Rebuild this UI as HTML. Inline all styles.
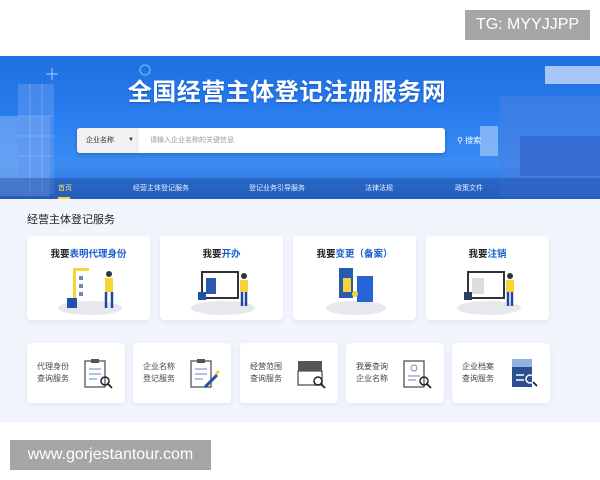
<!DOCTYPE html>
<html><head><meta charset="utf-8">
<style>
*{margin:0;padding:0;box-sizing:border-box}
body{width:600px;height:480px;background:#fff;font-family:"Liberation Sans","Noto Sans CJK SC",sans-serif;position:relative;overflow:hidden}
.tg{position:absolute;left:465px;top:10px;width:125px;height:30px;background:#a6a6a6;color:#fff;font-size:16px;line-height:30px;text-align:center}
.wm{position:absolute;left:10px;top:440px;width:201px;height:30px;background:#a6a6a6;color:#fff;font-size:16px;line-height:30px;text-align:center}
.banner{position:absolute;left:0;top:56px;width:600px;height:143px;background:linear-gradient(180deg,#1f6fe0 0%,#2a7ef0 45%,#3b8df2 75%,#2d6fd6 100%);overflow:hidden}
.title{position:absolute;left:0;width:574px;top:16px;text-align:center;color:#fff;font-size:24px;font-weight:bold;letter-spacing:0.5px;text-shadow:0 1px 2px rgba(0,40,120,.4)}
.search{position:absolute;left:77px;top:72px;width:368px;height:25px;background:#fff;border-radius:3px;box-shadow:0 2px 4px rgba(0,0,0,.2)}
.sel{position:absolute;left:0;top:0;width:62px;height:25px;background:#f1f1f1;border-radius:3px 0 0 3px;font-size:7px;color:#333;line-height:25px;padding-left:9px}
.sel b{position:absolute;left:51px;font-size:6px}
.ph{position:absolute;left:73px;top:0;line-height:25px;font-size:7px;color:#999}
.sbtn{position:absolute;left:457px;top:128px;color:#fff;font-size:8px;line-height:25px}
.nav{position:absolute;left:0;top:122px;width:600px;height:21px;background:rgba(20,60,140,.35)}
.nav span{position:absolute;top:5px;font-size:7px;color:#e8f0ff}
.content{position:absolute;left:0;top:199px;width:600px;height:223px;background:#f2f5fc}
.h{position:absolute;left:27px;top:12px;font-size:11px;color:#222}
.card{position:absolute;background:#fff;border-radius:4px;box-shadow:0 2px 6px rgba(120,140,190,.15)}
.big{top:37px;height:84px;width:123px}
.big .t{position:absolute;top:10px;width:100%;text-align:center;font-size:9.5px;font-weight:bold;color:#222}
.big .t em{font-style:normal;color:#1a5fd0}
.sm{top:144px;height:60px;width:98px}
.sm .t{position:absolute;left:10px;top:18px;font-size:8px;color:#444;line-height:12px}
.sm svg{position:absolute;left:56px;top:14px}
.big svg{position:absolute;left:28px;top:28px}
</style></head><body>
<div class="tg">TG: MYYJJPP</div>
<div class="banner">
<svg width="600" height="143" style="position:absolute;left:0;top:0">
<rect x="0" y="60" width="50" height="80" fill="#8fb8f5" opacity=".5"/>
<rect x="18" y="28" width="36" height="110" fill="#5e98ee" opacity=".55"/>
<g stroke="#bcd6ff" stroke-width=".6" opacity=".6"><line x1="18" y1="60" x2="54" y2="60"/><line x1="18" y1="80" x2="54" y2="80"/><line x1="18" y1="100" x2="54" y2="100"/><line x1="30" y1="28" x2="30" y2="138"/><line x1="42" y1="28" x2="42" y2="138"/></g>
<rect x="500" y="40" width="100" height="100" fill="#4a7fe0" opacity=".55"/>
<rect x="520" y="80" width="80" height="40" fill="#2e5fc8" opacity=".6"/>
<rect x="545" y="10" width="55" height="18" fill="#dfeaff" opacity=".7"/>
<rect x="480" y="70" width="18" height="30" fill="#cfe0ff" opacity=".5"/>
<circle cx="145" cy="14" r="5" fill="none" stroke="#6fb0ff" stroke-width="1.3"/>
<path d="M52 12v12M46 18h12" stroke="#8cc0ff" stroke-width="1.2"/>
</svg>
<div class="title">全国经营主体登记注册服务网</div>
<div class="search"><div class="sel">企业名称<b>▼</b></div><div class="ph">请输入企业名称的关键信息</div></div>
<div class="nav">
<span style="left:58px;color:#ffe066">首页</span>
<div style="position:absolute;left:58px;top:19px;width:12px;height:2px;background:#ffd23c"></div>
<span style="left:133px">经营主体登记服务</span>
<span style="left:249px">登记业务引导服务</span>
<span style="left:365px">法律法规</span>
<span style="left:455px">政策文件</span>
</div>
</div>
<div class="sbtn">&#9906; 搜索</div>
<div class="content">
<div class="h">经营主体登记服务</div>
<div class="card big" style="left:27px"><div class="t">我要<em>表明代理身份</em></div>
<svg width="70" height="52"><ellipse cx="35" cy="44" rx="32" ry="7" fill="#e6e8ee"/><path d="M18 4h16v3H21v36h-3z" fill="#f5d33a"/><g fill="#6b86b8"><rect x="24" y="12" width="4" height="4"/><rect x="24" y="20" width="4" height="4"/><rect x="24" y="28" width="4" height="4"/></g><rect x="12" y="34" width="10" height="10" fill="#2252a8"/><circle cx="54" cy="10" r="3" fill="#333"/><rect x="50" y="14" width="8" height="14" fill="#f5d33a"/><path d="M51 28v16M57 28v16" stroke="#1c4aa0" stroke-width="2.5"/></svg></div>
<div class="card big" style="left:160px"><div class="t">我要<em>开办</em></div>
<svg width="70" height="52"><ellipse cx="35" cy="44" rx="32" ry="7" fill="#e6e8ee"/><rect x="14" y="8" width="36" height="26" fill="#fff" stroke="#333" stroke-width="2"/><rect x="18" y="14" width="10" height="16" fill="#2a5ab0"/><rect x="10" y="28" width="8" height="8" fill="#2252a8"/><circle cx="56" cy="12" r="3" fill="#333"/><rect x="52" y="16" width="8" height="12" fill="#f5d33a"/><path d="M54 28v14M58 28v14" stroke="#1c4aa0" stroke-width="2.5"/></svg></div>
<div class="card big" style="left:293px"><div class="t">我要<em>变更（备案）</em></div>
<svg width="70" height="52"><ellipse cx="35" cy="44" rx="30" ry="7" fill="#e6e8ee"/><rect x="18" y="4" width="14" height="30" fill="#2a5ab0"/><rect x="36" y="12" width="16" height="26" fill="#2563d6"/><rect x="22" y="14" width="8" height="14" fill="#f5d33a"/><circle cx="34" cy="30" r="3" fill="#f5d33a"/></svg></div>
<div class="card big" style="left:426px"><div class="t">我要<em>注销</em></div>
<svg width="70" height="52"><ellipse cx="35" cy="44" rx="32" ry="7" fill="#e6e8ee"/><rect x="14" y="8" width="36" height="26" fill="#fff" stroke="#333" stroke-width="2"/><rect x="18" y="14" width="12" height="16" fill="#ddd"/><rect x="10" y="28" width="8" height="8" fill="#2b3f66"/><circle cx="56" cy="12" r="3" fill="#333"/><rect x="52" y="16" width="8" height="12" fill="#f5d33a"/><path d="M54 28v14M58 28v14" stroke="#1c4aa0" stroke-width="2.5"/></svg></div>

<div class="card sm" style="left:27px"><div class="t">代理身份<br>查询服务</div><svg width="32" height="34"><rect x="2" y="4" width="20" height="26" fill="#fff" stroke="#555" stroke-width="1.3"/><rect x="8" y="2" width="8" height="4" fill="#555"/><path d="M6 12h12M6 17h12M6 22h8" stroke="#6b86b8"/><circle cx="22" cy="24" r="4" fill="none" stroke="#222" stroke-width="1.5"/><path d="M25 27l4 4" stroke="#222" stroke-width="1.8"/></svg></div>
<div class="card sm" style="left:133px"><div class="t">企业名称<br>登记服务</div><svg width="32" height="34"><rect x="2" y="4" width="20" height="26" fill="#fff" stroke="#555" stroke-width="1.3"/><rect x="8" y="2" width="8" height="4" fill="#555"/><path d="M6 12h12M6 17h12M6 22h8" stroke="#6b86b8"/><path d="M16 30l12-12" stroke="#2252a8" stroke-width="3"/><path d="M27 17l3-3" stroke="#f5d33a" stroke-width="3"/></svg></div>
<div class="card sm" style="left:240px"><div class="t">经营范围<br>查询服务</div><svg width="32" height="34"><rect x="2" y="4" width="24" height="10" fill="#555"/><rect x="2" y="14" width="24" height="14" fill="#fff" stroke="#555" stroke-width="1.3"/><circle cx="22" cy="24" r="4" fill="none" stroke="#222" stroke-width="1.5"/><path d="M25 27l4 4" stroke="#222" stroke-width="1.8"/></svg></div>
<div class="card sm" style="left:346px"><div class="t">我要查询<br>企业名称</div><svg width="32" height="34"><rect x="2" y="4" width="20" height="26" fill="#fff" stroke="#555" stroke-width="1.3"/><circle cx="12" cy="11" r="3" fill="none" stroke="#888"/><path d="M6 19h12M6 23h8" stroke="#6b86b8"/><circle cx="22" cy="24" r="4" fill="none" stroke="#222" stroke-width="1.5"/><path d="M25 27l4 4" stroke="#222" stroke-width="1.8"/></svg></div>
<div class="card sm" style="left:452px"><div class="t">企业档案<br>查询服务</div><svg width="32" height="34"><rect x="4" y="2" width="20" height="28" fill="#2b4f8f"/><rect x="4" y="2" width="20" height="8" fill="#8fb0e0"/><path d="M8 18h8M8 23h8" stroke="#fff" stroke-width="1.5"/><circle cx="22" cy="22" r="4" fill="none" stroke="#fff" stroke-width="1.5"/><path d="M25 25l4 4" stroke="#222" stroke-width="1.8"/></svg></div>
</div>
<div class="wm">www.gorjestantour.com</div>
</body></html>
